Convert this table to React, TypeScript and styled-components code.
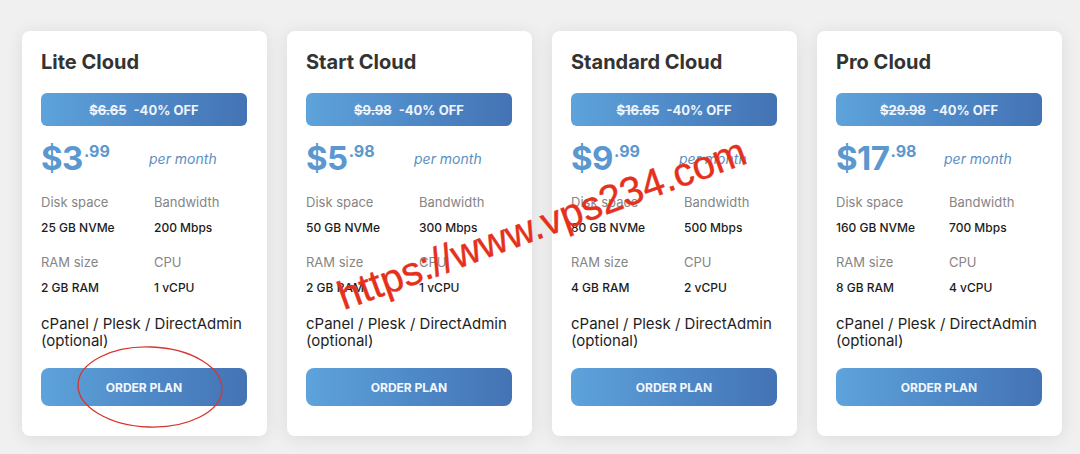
import React from "react";
import styled, { createGlobalStyle } from "styled-components";

const GlobalStyle = createGlobalStyle`
  html, body { margin: 0; padding: 0; }
  body {
    background: #f0f0f0;
    font-family: Inter, "Noto Sans", "Liberation Sans", sans-serif;
    -webkit-font-smoothing: antialiased;
  }
`;

const Page = styled.div`
  position: relative;
  width: 1080px;
  height: 454px;
  box-sizing: border-box;
  padding: 31px 18px 18px 22px;
  display: flex;
  gap: 20px;
  overflow: hidden;
`;

const Card = styled.div`
  width: 245px;
  height: 405px;
  box-sizing: border-box;
  background: #ffffff;
  border-radius: 8px;
  box-shadow: 0 2px 18px rgba(0, 0, 0, 0.09);
  padding: 19px 20px 30px 19px;
  display: flex;
  flex-direction: column;
`;

const Title = styled.h2`
  margin: 0;
  font-size: 20px;
  line-height: 24px;
  font-weight: 700;
  color: #333333;
`;

const gradient = `linear-gradient(90deg, #5ea3db 0%, #4f8ac8 50%, #4473b4 100%)`;

const Discount = styled.div`
  margin-top: 19px;
  height: 33px;
  border-radius: 6px;
  background: ${gradient};
  display: flex;
  align-items: center;
  justify-content: center;
  gap: 7px;
  color: #eef4fb;
  font-size: 13px;
  font-weight: 700;
`;

const OldPrice = styled.span`
  text-decoration: line-through;
  text-decoration-thickness: 1px;
`;

const PriceRow = styled.div`
  margin-top: 14px;
  height: 36px;
  display: flex;
  align-items: center;
`;

const Price = styled.div`
  width: 108px;
  display: flex;
  align-items: flex-start;
  color: #5a98cf;
  font-weight: 700;
`;

const Dollars = styled.span`
  font-size: 33px;
  line-height: 36px;
  letter-spacing: -0.5px;
`;

const Cents = styled.span`
  font-size: 16px;
  line-height: 16px;
  margin-top: 3px;
  margin-left: 1px;
`;

const PerMonth = styled.span`
  font-size: 14px;
  font-style: italic;
  color: #5b8fc4;
`;

const Specs = styled.div`
  margin-top: 18px;
  display: grid;
  grid-template-columns: 113px 1fr;
  row-gap: 18px;
`;

const Spec = styled.div`
  display: flex;
  flex-direction: column;
  gap: 10px;
`;

const SpecLabel = styled.span`
  font-size: 13px;
  line-height: 16px;
  color: #858585;
`;

const SpecValue = styled.span`
  font-size: 12px;
  line-height: 16px;
  font-weight: 500;
  color: #1c1c1c;
`;

const Panel = styled.div`
  margin-top: 19px;
  font-size: 15px;
  line-height: 17px;
  color: #1e1e1e;
`;

const OrderButton = styled.button`
  margin-top: auto;
  height: 38px;
  width: 100%;
  border: none;
  border-radius: 8px;
  background: ${gradient};
  color: #f3f7fc;
  font-family: inherit;
  font-size: 12px;
  font-weight: 700;
  cursor: pointer;
`;

const Watermark = styled.span`
  position: absolute;
  left: 326px;
  top: 203px;
  width: 433px;
  font-family: "Liberation Sans", Arial, sans-serif;
  font-size: 40px;
  line-height: 1;
  color: #e5301c;
  white-space: nowrap;
  transform: rotate(-20deg);
  -webkit-text-stroke: 0.4px #e5301c;
  pointer-events: none;
`;

const Circle = styled.svg`
  position: absolute;
  left: 70px;
  top: 340px;
  pointer-events: none;
`;

type Plan = {
  name: string;
  old: string;
  dollars: string;
  cents: string;
  disk: string;
  bandwidth: string;
  ram: string;
  cpu: string;
};

const plans: Plan[] = [
  { name: "Lite Cloud", old: "$6.65", dollars: "$3", cents: ".99", disk: "25 GB NVMe", bandwidth: "200 Mbps", ram: "2 GB RAM", cpu: "1 vCPU" },
  { name: "Start Cloud", old: "$9.98", dollars: "$5", cents: ".98", disk: "50 GB NVMe", bandwidth: "300 Mbps", ram: "2 GB RAM", cpu: "1 vCPU" },
  { name: "Standard Cloud", old: "$16.65", dollars: "$9", cents: ".99", disk: "80 GB NVMe", bandwidth: "500 Mbps", ram: "4 GB RAM", cpu: "2 vCPU" },
  { name: "Pro Cloud", old: "$29.98", dollars: "$17", cents: ".98", disk: "160 GB NVMe", bandwidth: "700 Mbps", ram: "8 GB RAM", cpu: "4 vCPU" },
];

export default function App() {
  return (
    <>
      <GlobalStyle />
      <Page>
        {plans.map((p) => (
          <Card key={p.name}>
            <Title>{p.name}</Title>
            <Discount>
              <OldPrice>{p.old}</OldPrice>
              <span>-40% OFF</span>
            </Discount>
            <PriceRow>
              <Price>
                <Dollars>{p.dollars}</Dollars>
                <Cents>{p.cents}</Cents>
              </Price>
              <PerMonth>per month</PerMonth>
            </PriceRow>
            <Specs>
              <Spec>
                <SpecLabel>Disk space</SpecLabel>
                <SpecValue>{p.disk}</SpecValue>
              </Spec>
              <Spec>
                <SpecLabel>Bandwidth</SpecLabel>
                <SpecValue>{p.bandwidth}</SpecValue>
              </Spec>
              <Spec>
                <SpecLabel>RAM size</SpecLabel>
                <SpecValue>{p.ram}</SpecValue>
              </Spec>
              <Spec>
                <SpecLabel>CPU</SpecLabel>
                <SpecValue>{p.cpu}</SpecValue>
              </Spec>
            </Specs>
            <Panel>
              cPanel / Plesk / DirectAdmin
              <br />
              (optional)
            </Panel>
            <OrderButton>ORDER PLAN</OrderButton>
          </Card>
        ))}
        <Watermark>https://www.vps234.com</Watermark>
        <Circle width="160" height="94" viewBox="0 0 160 94">
          <ellipse cx="80" cy="47" rx="72" ry="40" fill="none" stroke="#d8352c" strokeWidth="1.3" transform="rotate(2 80 47)" />
        </Circle>
      </Page>
    </>
  );
}
